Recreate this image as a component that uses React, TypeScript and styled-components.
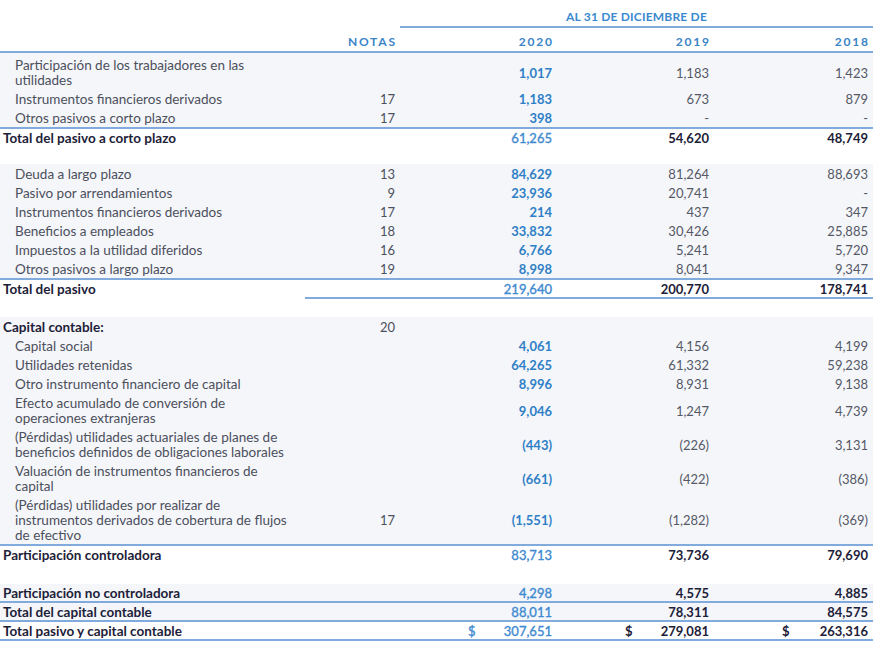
import React from "react";
import styled, { createGlobalStyle, css } from "styled-components";

const Global = createGlobalStyle`
  html, body { margin: 0; padding: 0; background: #ffffff; }
  body { font-family: Lato, "Open Sans", sans-serif; -webkit-font-smoothing: antialiased; }
`;

const LINE = "#80abdc";
const STRIPE = "#f4f6fa";
const BLUE = "#2f7fc6";
const BLUE_LIGHT = "#3f8ad0";
const GRAY = "#4c4f5c";
const GRAY_NUM = "#555866";
const DARK = "#1d2138";

const COLS = "305px 95px 157px 157px 159px";

const Sheet = styled.div`
  width: 873px;
  display: flex;
  flex-direction: column;
`;

const TitleRow = styled.div`
  display: grid;
  grid-template-columns: ${COLS};
  height: 28px;
`;

const YearsTitle = styled.div`
  grid-column: 3 / 6;
  display: flex;
  align-items: center;
  justify-content: center;
  padding-top: 6px;
  font-size: 12px;
  font-weight: 700;
  color: #3a89d0;
  letter-spacing: 0.2px;
  border-bottom: 2px solid ${LINE};
`;

const HeaderRow = styled.div`
  display: grid;
  grid-template-columns: ${COLS};
  height: 23px;
  border-bottom: 2px solid ${LINE};
  align-items: center;
`;

const HeaderCell = styled.div`
  text-align: right;
  padding-right: 5px;
  font-size: 12px;
  font-weight: 700;
  letter-spacing: 1.8px;
  margin-right: -1.8px;
  color: #3a84c8;
  padding-top: 3px;
`;

const Block = styled.div<{ $striped?: boolean; $line?: boolean; $padTop?: number }>`
  display: flex;
  flex-direction: column;
  padding-top: ${(p) => p.$padTop ?? 0}px;
  background: ${(p) => (p.$striped ? STRIPE : "transparent")};
  ${(p) => p.$line && css`border-bottom: 2px solid ${LINE};`}
`;

const Row = styled.div<{ $total?: boolean }>`
  display: grid;
  grid-template-columns: ${COLS};
  align-items: center;
  font-size: 13px;
  line-height: 15px;
  padding: ${(p) => (p.$total ? "2px 0 0" : "3px 0 1px")};
`;

const Spacer = styled.div<{ $h: number }>`
  height: ${(p) => p.$h}px;
`;

const Label = styled.div<{ $bold?: boolean }>`
  padding-left: ${(p) => (p.$bold ? "3px" : "15px")};
  font-size: 13.5px;
  color: ${(p) => (p.$bold ? DARK : GRAY)};
  font-weight: ${(p) => (p.$bold ? 700 : 400)};
`;

const Note = styled.div`
  text-align: right;
  padding-right: 5px;
  color: ${GRAY};
`;

type Tone = "current" | "currentTotal" | "prior" | "priorTotal";

const Value = styled.div<{ $tone: Tone }>`
  display: flex;
  justify-content: space-between;
  padding: 0 5px 0 68px;
  color: ${(p) =>
    p.$tone === "current" ? BLUE : p.$tone === "currentTotal" ? BLUE_LIGHT : p.$tone === "prior" ? GRAY_NUM : DARK};
  font-weight: ${(p) => (p.$tone === "current" || p.$tone === "priorTotal" ? 700 : 400)};
  ${(p) => p.$tone === "currentTotal" && css`-webkit-text-stroke: 0.35px ${BLUE_LIGHT};`}
`;

const Amount = styled.span`
  margin-left: auto;
`;

const Dollar = styled.span``;

const Underline = styled.div`
  display: grid;
  grid-template-columns: ${COLS};
`;

const UnderlineSeg = styled.div<{ $on?: boolean }>`
  height: 2px;
  background: ${(p) => (p.$on ? LINE : "transparent")};
`;

type Line = {
  label: string[];
  note?: string;
  values: [string, string, string];
  total?: boolean;
  dollar?: boolean;
};

const DataRow: React.FC<Line> = ({ label, note, values, total, dollar }) => (
  <Row $total={total}>
    <Label $bold={total}>
      {label.map((l, i) => (
        <React.Fragment key={i}>
          {i > 0 && <br />}
          {l}
        </React.Fragment>
      ))}
    </Label>
    <Note>{note}</Note>
    {values.map((v, i) => (
      <Value key={i} $tone={i === 0 ? (total ? "currentTotal" : "current") : total ? "priorTotal" : "prior"}>
        {dollar && <Dollar>$</Dollar>}
        <Amount>{v}</Amount>
      </Value>
    ))}
  </Row>
);

const shortTerm: Line[] = [
  { label: ["Participación de los trabajadores en las", "utilidades"], values: ["1,017", "1,183", "1,423"] },
  { label: ["Instrumentos financieros derivados"], note: "17", values: ["1,183", "673", "879"] },
  { label: ["Otros pasivos a corto plazo"], note: "17", values: ["398", "-", "-"] },
];

const longTerm: Line[] = [
  { label: ["Deuda a largo plazo"], note: "13", values: ["84,629", "81,264", "88,693"] },
  { label: ["Pasivo por arrendamientos"], note: "9", values: ["23,936", "20,741", "-"] },
  { label: ["Instrumentos financieros derivados"], note: "17", values: ["214", "437", "347"] },
  { label: ["Beneficios a empleados"], note: "18", values: ["33,832", "30,426", "25,885"] },
  { label: ["Impuestos a la utilidad diferidos"], note: "16", values: ["6,766", "5,241", "5,720"] },
  { label: ["Otros pasivos a largo plazo"], note: "19", values: ["8,998", "8,041", "9,347"] },
];

const equity: Line[] = [
  { label: ["Capital social"], values: ["4,061", "4,156", "4,199"] },
  { label: ["Utilidades retenidas"], values: ["64,265", "61,332", "59,238"] },
  { label: ["Otro instrumento financiero de capital"], values: ["8,996", "8,931", "9,138"] },
  { label: ["Efecto acumulado de conversión de", "operaciones extranjeras"], values: ["9,046", "1,247", "4,739"] },
  {
    label: ["(Pérdidas) utilidades actuariales de planes de", "beneficios definidos de obligaciones laborales"],
    values: ["(443)", "(226)", "3,131"],
  },
  { label: ["Valuación de instrumentos financieros de", "capital"], values: ["(661)", "(422)", "(386)"] },
  {
    label: ["(Pérdidas) utilidades por realizar de", "instrumentos derivados de cobertura de flujos", "de efectivo"],
    note: "17",
    values: ["(1,551)", "(1,282)", "(369)"],
  },
];

const SectionHead = styled(Row)``;

export default function App() {
  return (
    <>
      <Global />
      <Sheet>
        <TitleRow>
          <YearsTitle>AL 31 DE DICIEMBRE DE</YearsTitle>
        </TitleRow>
        <HeaderRow>
          <div />
          <HeaderCell>NOTAS</HeaderCell>
          <HeaderCell>2020</HeaderCell>
          <HeaderCell>2019</HeaderCell>
          <HeaderCell>2018</HeaderCell>
        </HeaderRow>

        <Block $striped $line $padTop={2}>
          {shortTerm.map((r, i) => (
            <DataRow key={i} {...r} />
          ))}
        </Block>
        <DataRow total label={["Total del pasivo a corto plazo"]} values={["61,265", "54,620", "48,749"]} />
        <Spacer $h={18} />

        <Block $striped $line>
          {longTerm.map((r, i) => (
            <DataRow key={i} {...r} />
          ))}
        </Block>
        <DataRow total label={["Total del pasivo"]} values={["219,640", "200,770", "178,741"]} />
        <Underline>
          <UnderlineSeg />
          <UnderlineSeg $on />
          <UnderlineSeg $on />
          <UnderlineSeg $on />
          <UnderlineSeg $on />
        </Underline>
        <Spacer $h={18} />

        <Block $striped $line>
          <SectionHead>
            <Label $bold>Capital contable:</Label>
            <Note>20</Note>
          </SectionHead>
          {equity.map((r, i) => (
            <DataRow key={i} {...r} />
          ))}
        </Block>
        <DataRow total label={["Participación controladora"]} values={["83,713", "73,736", "79,690"]} />
        <Spacer $h={21} />

        <Block $striped $line>
          <DataRow total label={["Participación no controladora"]} values={["4,298", "4,575", "4,885"]} />
        </Block>
        <Block $striped $line>
          <DataRow total label={["Total del capital contable"]} values={["88,011", "78,311", "84,575"]} />
        </Block>
        <Block $line>
          <DataRow total dollar label={["Total pasivo y capital contable"]} values={["307,651", "279,081", "263,316"]} />
        </Block>
      </Sheet>
    </>
  );
}
